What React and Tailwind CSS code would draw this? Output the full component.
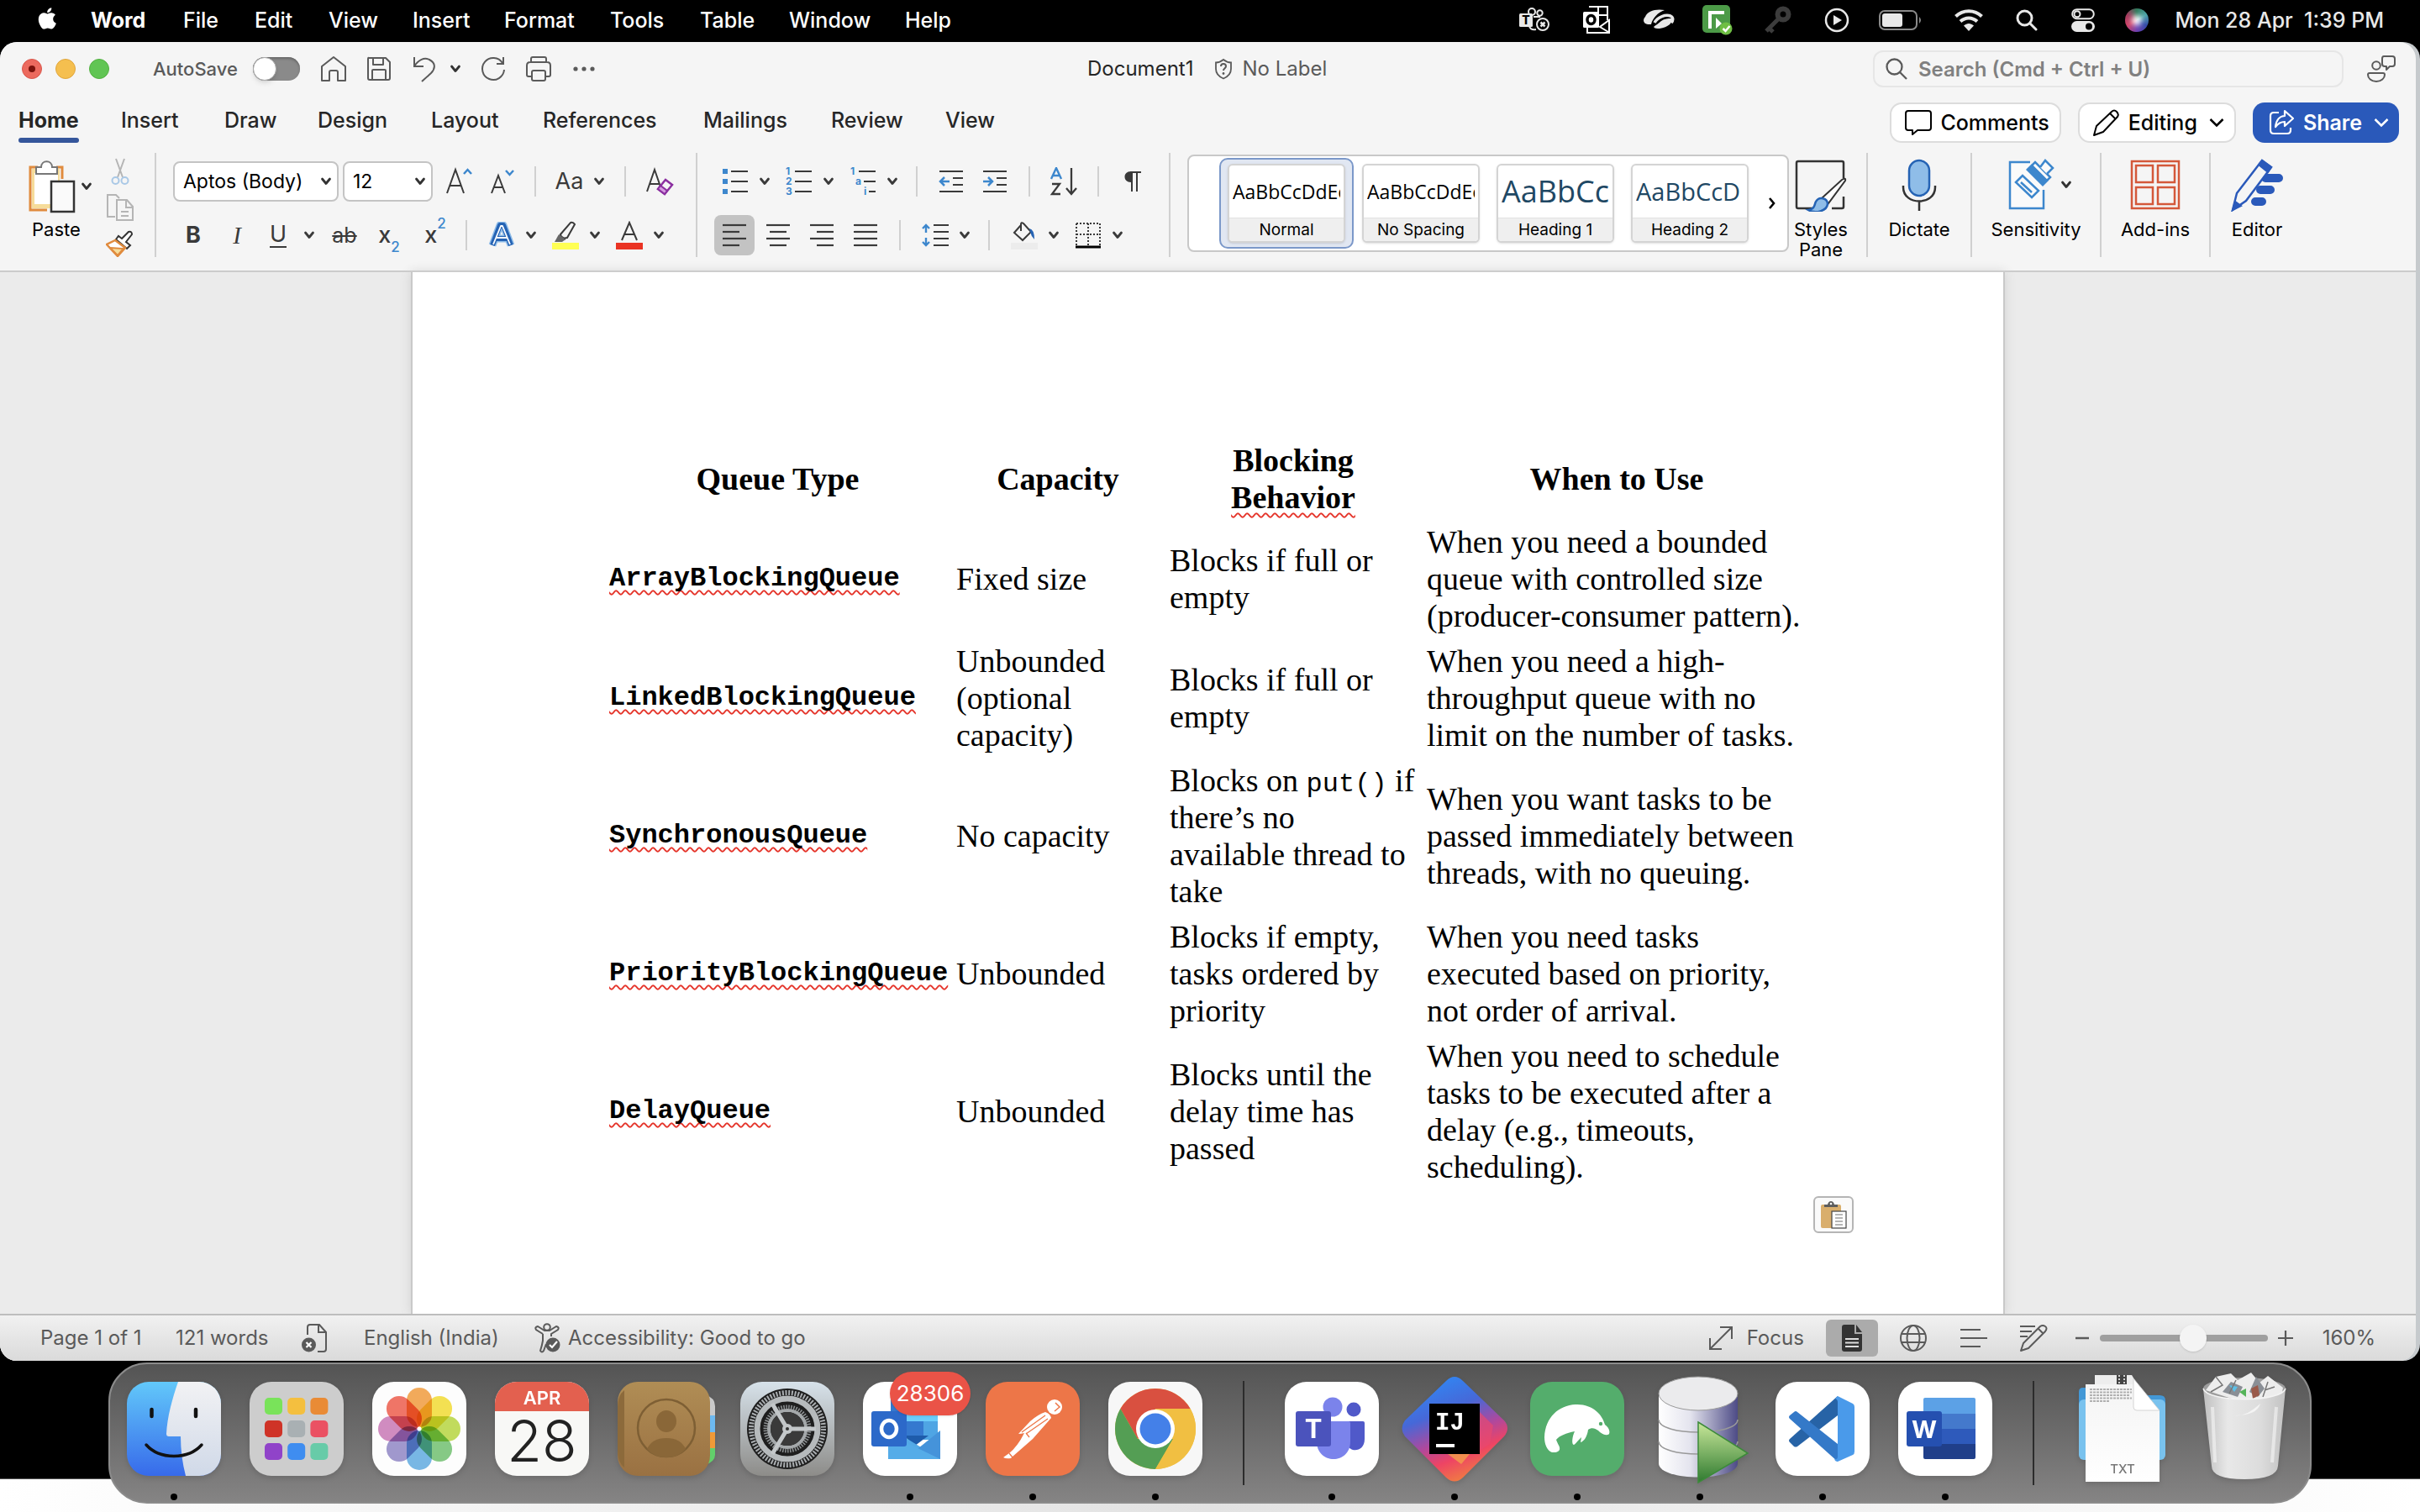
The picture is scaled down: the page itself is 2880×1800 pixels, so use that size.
import React from "react";

const Chev = ({ className = "" }) => (
  <svg className={"h-[10px] w-[14px] shrink-0 " + className} viewBox="0 0 14 10" fill="none" stroke="currentColor" strokeWidth="2.8" strokeLinecap="round" strokeLinejoin="round">
    <path d="M2.5 2 L7 7.5 L11.5 2" />
  </svg>
);

const Svg = ({ size = 32, w, h, vb, children, className = "", ...rest }) => (
  <svg width={w || size} height={h || size} viewBox={vb || `0 0 ${w || size} ${h || size}`} fill="none" stroke="currentColor" strokeWidth="2" className={"shrink-0 " + className} aria-hidden="true" {...rest}>
    {children}
  </svg>
);

const Sep = ({ className = "" }) => <div className={"h-9 w-0.5 shrink-0 bg-[#d0d0d0] " + className} />;
const TallSep = ({ className = "" }) => <div className={"w-0.5 shrink-0 self-stretch bg-[#d0d0d0] " + className} />;

const Tool = ({ label, children, className = "" }) => (
  <button type="button" aria-label={label} className={"flex h-12 shrink-0 items-center justify-center " + className}>{children}</button>
);
const Drop = ({ label, children, className = "" }) => (
  <Tool label={label} className={"w-[76px] gap-3 " + className}>{children}<Chev /></Tool>
);

/* ---------- menu bar ---------- */

function MenuBar() {
  const items = ["File", "Edit", "View", "Insert", "Format", "Tools", "Table", "Window", "Help"];
  return (
    <header className="flex h-[50px] shrink-0 items-center bg-black pr-[43px] pb-0.5 pl-10 text-[25px] leading-8 font-medium text-white">
      <Svg w={28} h={32} stroke="none" className="mb-1">
        <path fill="#fff" d="M23.2 16.8c0-3.3 2.7-4.9 2.8-5-1.5-2.2-3.9-2.5-4.7-2.6-2-.2-3.9 1.2-4.9 1.2s-2.6-1.2-4.2-1.1c-2.200 0-4.200 1.300-5.300 3.200-2.300 3.900-.6 9.700 1.600 12.900 1.100 1.600 2.400 3.300 4.100 3.200 1.600-.1 2.300-1.100 4.200-1.100 2 0 2.500 1.100 4.300 1 1.800 0 2.900-1.600 4-3.100 1.200-1.800 1.700-3.500 1.800-3.600-.1 0-3.700-1.400-3.700-5zM20 7.300c.9-1.100 1.500-2.600 1.300-4.100-1.300.1-2.900.9-3.800 2-.8.9-1.500 2.500-1.300 3.900 1.400.1 2.900-.7 3.800-1.800z" />
      </Svg>
      <nav className="ml-10 grid grid-cols-[110px_85px_88px_100px_109px_126px_107px_106px_138px_auto]">
        <button type="button" className="text-left font-bold">Word</button>
        {items.map((i) => <button key={i} type="button" className="text-left">{i}</button>)}
      </nav>
      <div className="ml-auto flex items-center text-[#e8e8e8]">
        <Svg w={38} h={32} className="mr-[38px]">
          <circle cx="16" cy="6" r="4" /><circle cx="25.500" cy="7.500" r="3.200" />
          <path d="M13 22c0 4 3 6 8 5M18 12h8" />
          <rect x="1" y="8" width="16" height="16" rx="1.500" fill="currentColor" stroke="none" />
          <text x="9" y="21" textAnchor="middle" fontFamily="Inter" fontWeight="800" fontSize="14" fill="#000" stroke="none">T</text>
          <circle cx="29" cy="21" r="7" fill="#000" /><path d="M26.500 18.500l5 5M31.500 18.500l-5 5" strokeWidth="2.500" />
        </Svg>
        <Svg w={34} h={34} className="mr-[38px]" stroke="#fff">
          <path d="M8 1h22v16M19 1v16M8 11h22M6 26v6h26V17l-11 8 10 6" />
          <rect x="1" y="7" width="19" height="19" rx="1.500" fill="#fff" stroke="none" />
          <ellipse cx="10.500" cy="16.500" rx="4.500" ry="5" stroke="#000" strokeWidth="3.500" />
        </Svg>
        <Svg w={38} h={28} stroke="none" className="mr-8">
          <path fill="currentColor" d="M3 10C5 3 16 0 26 2 18 5 12 11 10 19 1 20-1 14 3 10z" />
          <path fill="currentColor" d="M13 22c2-2 6-4 9-7 4-3 8-3 12-3 3 4-4 11-14 12-3 0-6 0-7-2z" />
          <path d="M14 17C18 10 27 7 33 9c4 2 3 6 1 8" stroke="currentColor" strokeWidth="3.500" />
        </Svg>
        <Svg w={38} h={38} stroke="none" className="mr-9">
          <rect x="1" y="1" width="33" height="33" rx="5" fill="#4c9a47" />
          <path d="M8 8h19v4H12v17H8z" fill="#fff" /><path d="M17 16l7 7-7 6z" fill="#fff" />
          <circle cx="29" cy="29" r="7.500" fill="#6fbe44" /><path d="M25.500 29l3 3 5-6" stroke="#fff" strokeWidth="2.500" fill="none" />
        </Svg>
        <Svg w={34} h={34} stroke="#3c3c3c" className="mr-[38px]">
          <circle cx="23" cy="10" r="6.500" strokeWidth="6" /><path d="M17 16L3 30M7 27l4 4" strokeWidth="5" />
        </Svg>
        <Svg size={30} className="mr-[34px]"><circle cx="15" cy="15" r="13" strokeWidth="2.500" /><path d="M11 9l10 6-10 6z" fill="currentColor" stroke="none" /></Svg>
        <Svg w={54} h={26} className="mr-9"><rect x="2" y="2" width="44" height="22" rx="6" stroke="#8a8a8a" /><rect x="5" y="5" width="24" height="16" rx="3" fill="currentColor" stroke="none" /><path d="M49 9q4 4 0 8z" fill="#8a8a8a" stroke="none" /></Svg>
        <Svg w={36} h={28} strokeWidth="4" className="mr-[38px]">
          <path d="M2.500 9.500C11 1 25 1 33.500 9.500M8 15.500c6-5.500 14-5.500 20 0" /><path d="M12 20.500c4-3.500 8-3.500 12 0L18 27z" fill="currentColor" stroke="none" />
        </Svg>
        <Svg size={26} strokeWidth="3" className="mr-10"><circle cx="10.500" cy="10.500" r="8.500" /><path d="M17 17l7 7" strokeLinecap="round" /></Svg>
        <Svg w={28} h={28} className="mr-9"><rect x="1.200" y="1.200" width="25.600" height="11" rx="5.500" /><circle cx="7" cy="6.700" r="3.500" /><rect x="0" y="15" width="28" height="13" rx="6.500" fill="currentColor" stroke="none" /><circle cx="21" cy="21.500" r="4" fill="#000" stroke="none" /></Svg>
        <span className="flex h-7 w-7 items-center justify-center rounded-full bg-[conic-gradient(#2f7a5b,#4ea4a9,#3349a8,#6d3fb0,#d0446a,#a03a5c,#2f7a5b)]"><span className="h-3 w-3 rounded-full bg-white blur-[3px]" /></span>
        <span className="ml-8 whitespace-pre">Mon 28 Apr  1:39 PM</span>
      </div>
    </header>
  );
}

/* ---------- title bar and tabs ---------- */

function TitleBar() {
  return (
    <div className="grid h-16 grid-cols-[1294px_1fr_auto] items-center text-[#5a5a5a]">
      <div className="flex items-center pl-[26px]">
        <div className="flex gap-4">
          <button type="button" aria-label="Close" className="flex h-6 w-6 items-center justify-center rounded-full border border-[#d9564b] bg-[#ec6a5e]"><span className="h-2 w-2 rounded-full bg-[#7a130c]" /></button>
          <button type="button" aria-label="Minimise" className="h-6 w-6 rounded-full border border-[#dfa53c] bg-[#f5bf4f]" />
          <button type="button" aria-label="Zoom" className="h-6 w-6 rounded-full border border-[#52b040] bg-[#61c554]" />
        </div>
        <label className="ml-[52px] flex items-center gap-[18px] text-[22px] leading-7 font-medium">
          AutoSave
          <input type="checkbox" className="h-7 w-14 shrink-0 appearance-none rounded-full bg-[#8a8a8a] shadow-[inset_0_2px_3px_#666] before:block before:h-7 before:w-7 before:rounded-full before:border before:border-[#aaa] before:bg-white before:shadow-md before:content-['']" />
        </label>
        <div className="ml-6 flex items-center gap-[22px]">
          <button type="button" aria-label="Home"><Svg strokeLinejoin="round"><path d="M2 30V13L16 2l14 11v17h-9V20q0-2-2-2h-6q-2 0-2 2v10z" /></Svg></button>
          <button type="button" aria-label="Save"><Svg strokeLinejoin="round"><path d="M4 3h20l5 5v19q0 2-2 2H5q-2 0-2-2V5q0-3 1-2zM9 3v8h12V3M8 29V18q0-1 1-1h14q1 0 1 1v11" /></Svg></button>
          <button type="button" aria-label="Undo" className="flex items-center gap-[14px]"><Svg><path d="M4 2v11h11M4 13C9 5 16 2 22 5c8 4 7 11 2 16L13 31" /></Svg><Chev className="text-[#333]" /></button>
          <button type="button" aria-label="Redo"><Svg><path d="M27 9A13 13 0 1 0 29 17M28 2v8h-8" /></Svg></button>
          <button type="button" aria-label="Print"><Svg strokeLinejoin="round"><path d="M7 8V4q0-2 2-2h14q2 0 2 2v4M8 25H4q-2 0-2-2V12q0-4 4-4h20q4 0 4 4v11q0 2-2 2h-4" /><rect x="8" y="18" width="16" height="12" rx="2" /></Svg></button>
          <button type="button" aria-label="More"><Svg stroke="none"><g fill="currentColor"><circle cx="6" cy="16" r="2.600" /><circle cx="16" cy="16" r="2.600" /><circle cx="26" cy="16" r="2.600" /></g></Svg></button>
        </div>
      </div>
      <div className="flex items-center text-[24px] leading-7">
        <span className="text-[#262626]">Document1</span>
        <Svg w={24} h={26} className="ml-6"><path d="M12 2c3 2.500 6 3.500 9 3.500V13c0 5-3 9-9 11.500C6 22 3 18 3 13V5.500C6 5.500 9 4.500 12 2z" strokeWidth="1.800" /><path d="M9 10c0-4 6-4 6 0 0 2-3 2.500-3 5" /><circle cx="12" cy="18.500" r="1.400" fill="currentColor" stroke="none" /></Svg>
        <span className="ml-[10px]">No Label</span>
      </div>
      <div className="flex items-center pr-6">
        <label className="flex h-11 w-[560px] items-center rounded-xl border-2 border-[#e6e6e6] pl-3">
          <Svg size={28} strokeWidth="2.300"><circle cx="11.500" cy="11.500" r="9" /><path d="M18 18l8 8" /></Svg>
          <input type="search" aria-label="Search" placeholder="Search (Cmd + Ctrl + U)" className="mt-0.5 ml-3 w-full bg-transparent text-[24px] leading-8 font-semibold outline-none placeholder:text-[#808080]" />
        </label>
        <button type="button" aria-label="Presence" className="ml-7"><Svg size={34}><circle cx="11" cy="13" r="4.800" /><path d="M3 22h16q2 0 2 2c0 4-4 8-10 8S1 28 1 24q0-2 2-2zM20 2h10q3 0 3 3v6q0 3-3 3h-3l-4 4v-4h-2q-3 0-3-3V5q0-3 2-3z" strokeLinejoin="round" /></Svg></button>
      </div>
    </div>
  );
}

function Tabs() {
  const tabs = ["Insert", "Draw", "Design", "Layout", "References", "Mailings", "Review", "View"];
  const pill = "flex h-12 items-center rounded-[14px] border-2 border-[#dcdcdc] bg-white text-black";
  return (
    <div className="mt-2 flex h-12 items-center text-[25px] leading-8 font-medium text-[#262626]">
      <nav className="ml-[22px] grid h-full grid-cols-[122px_123px_111px_135px_133px_191px_152px_136px_auto]">
        <button type="button" className="flex flex-col justify-between justify-self-start pt-[5px] font-bold">Home<span className="h-1.5 w-full rounded-full bg-[#35569b]" /></button>
        {tabs.map((t) => <button key={t} type="button" className="pb-1.5 text-left">{t}</button>)}
      </nav>
      <div className="mr-5 ml-auto flex gap-5">
        <button type="button" className={pill + " gap-2.5 pr-3 pl-4"}>
          <Svg size={32} strokeLinejoin="round"><path d="M4 2h24q3 0 3 3v17q0 3-3 3H15l-6 5v-5H4q-3 0-3-3V5q0-3 3-3z" /></Svg>Comments
        </button>
        <button type="button" className={pill + " gap-2.5 pr-3 pl-4"}>
          <Svg size={32} strokeLinejoin="round"><path d="M1 31l3-11L22 3q3-3 6 0t1 6L12 27zM20 5l7 7" /></Svg>Editing
          <svg className="ml-1 h-3 w-[18px]" viewBox="0 0 18 12" fill="none" stroke="currentColor" strokeWidth="2.500"><path d="M1.500 2L9 9.500 16.500 2" /></svg>
        </button>
        <button type="button" className="flex h-12 items-center gap-2.5 rounded-[14px] bg-[#2a59ba] pr-3 pl-[18px] font-semibold text-white">
          <Svg size={32} strokeLinejoin="round" strokeWidth="2.200"><path d="M13 4H7q-4 0-4 4v17q0 4 4 4h16q4 0 4-4v-3M20 2l10 9-10 9v-5c-5 0-8 2-11 6 1-8 5-13 11-13z" /></Svg>Share
          <svg className="ml-1 h-3 w-[18px]" viewBox="0 0 18 12" fill="none" stroke="currentColor" strokeWidth="2.500"><path d="M1.500 2L9 9.500 16.500 2" /></svg>
        </button>
      </div>
    </div>
  );
}

/* ---------- ribbon ---------- */

const Lines = ({ rows }) => (
  <Svg w={30} h={28} strokeWidth="2.200">{rows.map(([a, b], i) => <path key={i} d={`M${a} ${2 + i * 8}H${b}`} />)}</Svg>
);

function Combo({ label, value, className }) {
  return (
    <div className={"relative h-12 " + className}>
      <select aria-label={label} className="h-full w-full appearance-none rounded-lg border-2 border-[#c4c4c4] bg-white pl-2.5 text-[23px] leading-7 text-black"><option>{value}</option></select>
      <Chev className="pointer-events-none absolute top-[19px] right-2 text-[#333]" />
    </div>
  );
}

function Clipboard() {
  return (
    <div className="flex h-full w-[184px]">
      <button type="button" className="flex w-[120px] flex-col items-start pt-2 pl-8 text-[22px] leading-6 text-black">
        <span className="flex items-center gap-1">
          <Svg w={60} h={64}>
            <path d="M24 60H4V9h9M35 9h7v14" stroke="#e08b3e" strokeWidth="3" /><path d="M6 11h33v14H28v33H6z" fill="#f6dc9a" stroke="none" /><path d="M9 16h28v10H28v27H9z" fill="#fff" stroke="none" />
            <path d="M11 17V9h6c0-9 13-9 13 0h6v8z" fill="#fff" stroke="#777" />
            <rect x="29" y="26" width="27" height="36" fill="#fafafa" stroke="#333" strokeWidth="2.500" />
          </Svg>
          <Chev className="text-[#333]" />
        </span>
        <span className="mt-[7px] ml-1.5">Paste</span>
      </button>
      <div className="flex flex-col items-center gap-2.5 pt-1.5 pl-1.5">
        <button type="button" aria-label="Cut"><Svg w={32} h={32} stroke="#b5b5b5"><path d="M11 1l8 22M21 1l-8 22" /><circle cx="10.500" cy="27" r="4" stroke="#a9c8e6" /><circle cx="21.500" cy="27" r="4" stroke="#a9c8e6" /></Svg></button>
        <button type="button" aria-label="Copy"><Svg w={34} h={34} stroke="#b5b5b5"><path d="M11 28H2V2h10l4 4" /><path d="M13 8h12l7 8v16H13zM24 8v9h8M18 22h9M18 27h9" /></Svg></button>
        <button type="button" aria-label="Format Painter"><Svg w={34} h={32}><path d="M19 10l8-8q4-1 4 3l-7 9 5 4-4 4-13-11 3-4z" stroke="#333" fill="#fff" /><path d="M11 12L1 17l13 14 9-10z" stroke="#e08b3e" strokeWidth="2.500" fill="#fff" /><path d="M5 21l16 1-7 8z" fill="#f6dc9a" stroke="#e08b3e" /></Svg></button>
      </div>
    </div>
  );
}

function FontGroup() {
  return (
    <div className="ml-5 flex w-[622px] flex-col gap-4 pt-[10px] text-[#3a3a3a]">
      <div className="flex items-center">
        <Combo label="Font" value="Aptos (Body)" className="w-[197px]" />
        <Combo label="Font size" value="12" className="ml-[5px] w-[107px]" />
        <Tool label="Grow font" className="ml-1 w-[53px]"><Svg w={32} h={34}><path d="M2 31L12 3l10 28M6 22h12" /><path d="M22 8l4.500-5L31 8" stroke="#3d87cd" strokeWidth="2.500" /></Svg></Tool>
        <Tool label="Shrink font" className="w-[53px]"><Svg w={32} h={34}><path d="M2 31L10 10l8 21M5 24h10" /><path d="M19 4l4.500 5L28 4" stroke="#3d87cd" strokeWidth="2.500" /></Svg></Tool>
        <Sep className="ml-[11px]" />
        <Tool label="Change case" className="w-[105px] gap-3 text-[27px]">Aa<Chev /></Tool>
        <Sep />
        <Tool label="Clear formatting" className="w-20"><Svg w={34} h={34}><path d="M2 29L11 3l9 26M5 20h11" /><path d="M15 26l9-11 8 6-9 11z" fill="#f5f5f5" stroke="#8b2fa0" strokeWidth="2.500" /><path d="M15 26l3-4 8 6-3 4z" fill="#d59be0" stroke="#8b2fa0" /></Svg></Tool>
      </div>
      <div className="flex items-center text-[27px] leading-8">
        <Tool label="Bold" className="w-12 font-bold">B</Tool>
        <Tool label="Italic" className="w-14"><span className="font-['Liberation_Serif',serif] text-[29px] italic">I</span></Tool>
        <Tool label="Underline" className="w-[76px] gap-5"><span className="border-b-2 border-current leading-7">U</span><Chev /></Tool>
        <Tool label="Strikethrough" className="w-12"><span className="text-[25px] line-through">ab</span></Tool>
        <Tool label="Subscript" className="w-[58px] font-medium">x<span className="self-end text-[17px] leading-5 text-[#3d87cd]">2</span></Tool>
        <Tool label="Superscript" className="w-[52px] font-medium">x<span className="self-start text-[17px] leading-5 text-[#3d87cd]">2</span></Tool>
        <Sep className="ml-[10px]" />
        <Drop label="Text effects" className="ml-4"><Svg w={32} h={32} strokeLinejoin="round"><path d="M5 28L14 4h4l9 24M9 20h14" stroke="#8dbbe8" strokeWidth="9" /><path d="M5 28L14 4h4l9 24M9 20h14" stroke="#2563b4" strokeWidth="6" /><path d="M6 27L15 5h2l9 22M10 19h12" stroke="#fff" strokeWidth="1.800" /></Svg></Drop>
        <Drop label="Highlight"><Svg w={32} h={34}><path d="M10 16L22 2q3-1 5 2L18 20l-6 1zM9 17l7 5" stroke="#3a3a3a" /><path d="M8 16l8 6-4 3H3z" fill="#666" stroke="none" /><rect x="0" y="26" width="32" height="8" fill="#ffff54" stroke="none" /></Svg></Drop>
        <Drop label="Font colour"><Svg w={32} h={34}><path d="M7 23L16 2l9 21M10 16h12" /><rect x="0" y="26" width="32" height="8" fill="#ea3323" stroke="none" /></Svg></Drop>
      </div>
    </div>
  );
}

const Digit = ({ x, y, children }) => <text x={x} y={y} fontFamily="Inter" fontSize="12" fontWeight="700" fill="#3d87cd" stroke="none">{children}</text>;

function ParagraphGroup() {
  return (
    <div className="ml-5 flex w-[542px] flex-col gap-4 pt-[10px] text-[#3a3a3a]">
      <div className="flex items-center">
        <Drop label="Bullets"><Svg w={32} h={32}><path d="M11 4h20M11 16h20M11 28h20" strokeWidth="2.200" /><g fill="#3d87cd" stroke="none"><rect x="1" y="1" width="6" height="6" /><rect x="1" y="13" width="6" height="6" /><rect x="1" y="25" width="6" height="6" /></g></Svg></Drop>
        <Drop label="Numbering"><Svg w={32} h={34}><path d="M11 5h20M11 17h20M11 29h20" strokeWidth="2.200" /><Digit x="0" y="9">1</Digit><Digit x="0" y="21">2</Digit><Digit x="0" y="33">3</Digit></Svg></Drop>
        <Drop label="Multilevel list"><Svg w={32} h={34}><path d="M11 5h20M17 17h14M23 29h8" strokeWidth="2.200" /><Digit x="1" y="9">1</Digit><Digit x="7" y="21">a</Digit><Digit x="17" y="33">i</Digit></Svg></Drop>
        <Sep className="ml-3" />
        <Tool label="Decrease indent" className="ml-3.5 w-[52px]"><Svg w={30} h={28} strokeWidth="2.200"><path d="M1 2h28M17 10h12M17 18h12M1 26h28" /><path d="M13 14H2M7 9l-5 5 5 5" stroke="#3d87cd" strokeWidth="2.500" /></Svg></Tool>
        <Tool label="Increase indent" className="w-[52px]"><Svg w={30} h={28} strokeWidth="2.200"><path d="M1 2h28M17 10h12M17 18h12M1 26h28" /><path d="M1 14h11M7 9l5 5-5 5" stroke="#3d87cd" strokeWidth="2.500" /></Svg></Tool>
        <Sep className="ml-3.5" />
        <Tool label="Sort" className="w-20"><Svg w={34} h={34}><path d="M2 14L8 1l6 13M4 10h8" stroke="#3d87cd" strokeWidth="2.400" /><path d="M3 20h9L3 32h10M26 1v31M20 25l6 7 6-7" strokeWidth="2.300" /></Svg></Tool>
        <Sep />
        <Tool label="Show marks" className="w-20"><Svg w={22} h={26}><path d="M9 14C-1 14-1 1 9 1h11v2H9z" fill="currentColor" stroke="none" /><path d="M10 25V2M16 25V2M8 2h13" /></Svg></Tool>
      </div>
      <div className="flex items-center">
        <div className="flex gap-1">
          <Tool label="Align left" className="w-12 rounded-lg bg-[#c3c3c3]"><Lines rows={[[1, 29], [1, 21], [1, 29], [1, 21]]} /></Tool>
          <Tool label="Centre" className="w-12"><Lines rows={[[1, 29], [5, 25], [1, 29], [5, 25]]} /></Tool>
          <Tool label="Align right" className="w-12"><Lines rows={[[1, 29], [9, 29], [1, 29], [9, 29]]} /></Tool>
          <Tool label="Justify" className="w-12"><Lines rows={[[1, 29], [1, 29], [1, 29], [1, 29]]} /></Tool>
        </div>
        <Sep className="ml-4" />
        <Drop label="Line spacing" className="ml-4"><Svg w={32} h={28} strokeWidth="2.200"><path d="M14 2h18M14 10h18M14 18h18M14 26h18" /><path d="M5 11V2M1 6l4-4 4 4M5 17v9M1 22l4 4 4-4" stroke="#3d87cd" strokeWidth="2.400" /></Svg></Drop>
        <Sep className="ml-3" />
        <Drop label="Shading" className="ml-4"><Svg w={32} h={34}><path d="M12 5L4 14l10 9 10-10L15 3q-3-2-3 1v8" /><path d="M22 9q6 1 6 13-4-4-5-9z" fill="#2563b4" stroke="none" /><rect y="26" width="32" height="8" fill="#ececec" stroke="none" /></Svg></Drop>
        <Drop label="Borders"><Svg w={32} h={32}><path d="M2 2h28M2 2v26M30 2v26M16 2v26M2 15h28" strokeDasharray="2 2" /><path d="M1 30h30" stroke="#000" strokeWidth="3" /></Svg></Drop>
      </div>
    </div>
  );
}

function StyleCard({ name, children, selected }) {
  return (
    <button type="button" className={"flex h-[108px] w-40 items-center justify-center rounded-[10px] border-2 " + (selected ? "border-[#7b98c9] bg-[#e1e7f2]" : "border-transparent")}>
      <span className="flex h-[94px] w-[140px] flex-col overflow-hidden rounded-md border-2 border-[#d4d4d4] bg-white shadow-sm">
        <span className="flex h-[62px] items-center overflow-hidden px-1"><span className="w-full overflow-hidden text-left whitespace-nowrap">{children}</span></span>
        <span className="flex flex-1 items-center justify-center border-t border-[#e2e2e2] bg-[#efefef] text-[19px] leading-6 text-black">{name}</span>
      </span>
    </button>
  );
}

const Big = ({ icon, label, className = "" }) => (
  <button type="button" className={"flex h-full flex-col items-center pt-1.5 text-[22px] leading-6 text-black " + className}>
    <span className="flex h-16 items-center gap-1.5">{icon}</span>
    <span className="mt-[9px] text-center">{label}</span>
  </button>
);

function Ribbon() {
  return (
    <div className="mt-3 border-b-2 border-[#cbcbcb] pb-4">
      <div className="flex h-[124px]">
        <Clipboard />
        <TallSep />
        <FontGroup />
        <TallSep />
        <ParagraphGroup />
        <TallSep className="-ml-px" />
        <div className="mt-0.5 ml-5 flex h-[116px] items-center rounded-lg border-2 border-[#c8c8c8] bg-white pl-9">
          <StyleCard name="Normal" selected><span className="font-['Open_Sans',sans-serif] text-[23px] leading-9 text-black">AaBbCcDdEe</span></StyleCard>
          <StyleCard name="No Spacing"><span className="font-['Open_Sans',sans-serif] text-[23px] leading-9 text-black">AaBbCcDdEe</span></StyleCard>
          <StyleCard name="Heading 1"><span className="font-['Open_Sans',sans-serif] text-[36px] leading-[48px] text-[#1f4864]">AaBbCc</span></StyleCard>
          <StyleCard name="Heading 2"><span className="font-['Open_Sans',sans-serif] text-[29px] leading-10 text-[#1f4864]">AaBbCcD</span></StyleCard>
          <button type="button" aria-label="More styles" className="flex w-9 justify-center"><Svg w={12} h={16} strokeWidth="2.600"><path d="M3 2l5 6-5 6" /></Svg></button>
        </div>
        <Big className="mr-4 w-[76px]" label={<>Styles<br />Pane</>} icon={<Svg w={66} h={64}>
          <path d="M24 60H6q-2 0-2-2V6q0-2 2-2h52q2 0 2 2v18M60 46v12q0 2-2 2H46" stroke="#333" strokeWidth="2.500" />
          <path d="M34 48L58 26q5-3 4 1L42 54z" fill="#fff" stroke="#333" /><path d="M18 62c8-1 7-6 9-10 4-7 14-4 14 3-1 8-14 12-23 7z" fill="#8fbde8" stroke="#2563b4" strokeWidth="2.500" />
        </Svg>} />
        <TallSep />
        <Big className="w-[122px]" label="Dictate" icon={<Svg w={42} h={62}><rect x="9" y="2" width="24" height="42" rx="12" fill="#8fbde8" stroke="#2563b4" strokeWidth="2.500" /><path d="M2 32v2c0 22 38 22 38 0v-2M21 50v12" stroke="#333" strokeWidth="2.500" /></Svg>} />
        <TallSep />
        <Big className="w-[152px]" label="Sensitivity" icon={<><span className="w-0.5" /><Svg w={58} h={64} stroke="#3d87cd" strokeWidth="2.500"><path d="M28 5H4v55h40V38" fill="#fafafa" /><path d="M11 29l8-8 19 18-8 8zM17 29l13 12" fill="#fafafa" /><path d="M25 14l9-9 18 18-9 9z" fill="#fafafa" /><path d="M25 14l5-5 18 18-5 5z" fill="#3d87cd" /><path d="M40 11l6-8 9 9-7 7" fill="#fafafa" /></Svg><Chev className="text-[#333]" /></>} />
        <TallSep />
        <Big className="w-32" label="Add-ins" icon={<Svg w={60} h={62} stroke="#d4583a" strokeWidth="2.500"><rect x="2" y="3" width="56" height="56" /><rect x="7" y="8" width="20" height="20" /><rect x="33" y="8" width="20" height="20" /><rect x="7" y="34" width="20" height="20" /><rect x="33" y="34" width="20" height="20" /></Svg>} />
        <TallSep />
        <Big className="w-[110px]" label="Editor" icon={<Svg w={64} h={64} stroke="#2a59ba"><path d="M42 24h16M36 38h12M30 52h8" strokeWidth="10" strokeLinecap="round" /><path d="M3 62L8 42 38 3l11 8-30 40z" fill="#f5f5f5" strokeWidth="2.500" /><path d="M3 62l3-10 7 5zM34 8l4-5 11 8-4 6z" fill="#2a59ba" /></Svg>} />
      </div>
    </div>
  );
}

/* ---------- document ---------- */

const Wavy = ({ children, className = "" }) => (
  <span className={"underline decoration-[#e5352b] decoration-wavy decoration-2 underline-offset-[5px] [text-decoration-skip-ink:none] " + className}>{children}</span>
);

const rows = [
  ["ArrayBlockingQueue", ["Fixed size"], ["Blocks if full or", "empty"], ["When you need a bounded", "queue with controlled size", "(producer-consumer pattern)."]],
  ["LinkedBlockingQueue", ["Unbounded", "(optional", "capacity)"], ["Blocks if full or", "empty"], ["When you need a high-", "throughput queue with no", "limit on the number of tasks."]],
  ["SynchronousQueue", ["No capacity"], [<>Blocks on <code className="font-['Liberation_Mono',monospace] text-[32px]">put()</code> if</>, "there’s no", "available thread to", "take"], ["When you want tasks to be", "passed immediately between", "threads, with no queuing."]],
  ["PriorityBlockingQueue", ["Unbounded"], ["Blocks if empty,", "tasks ordered by", "priority"], ["When you need tasks", "executed based on priority,", "not order of arrival."]],
  ["DelayQueue", ["Unbounded"], ["Blocks until the", "delay time has", "passed"], ["When you need to schedule", "tasks to be executed after a", "delay (e.g., timeouts,", "scheduling)."]],
];

function Document() {
  return (
    <main className="flex flex-1 justify-center bg-[#ebebeb]">
      <article className="flex w-[66%] flex-col items-center border-x-2 border-[#c9c9c9] bg-white pt-[198px] shadow-[0_0_12px_#d0d0d0]">
        <div className="ml-2 flex flex-col">
          <table className="table-fixed text-left font-['Liberation_Serif','Times_New_Roman',serif] text-[38px] leading-[44px] text-black">
            <colgroup><col className="w-[413px]" /><col className="w-[254px]" /><col className="w-[306px]" /><col className="w-[460px]" /></colgroup>
            <thead>
              <tr className="text-center">
                <th className="py-1 pr-3">Queue Type</th>
                <th className="py-1 pr-3">Capacity</th>
                <th className="py-1 pr-3">Blocking<br /><Wavy>Behavior</Wavy></th>
                <th className="py-1 pr-2">When to Use</th>
              </tr>
            </thead>
            <tbody>
              {rows.map(([name, ...cells]) => (
                <tr key={name}>
                  <th scope="row" className="py-[5px] font-['Liberation_Mono',monospace] text-[32px]"><Wavy>{name}</Wavy></th>
                  {cells.map((lines, i) => (
                    <td key={i} className="py-[5px] whitespace-nowrap">{lines.map((l, j) => <div key={j} className="h-11">{l}</div>)}</td>
                  ))}
                </tr>
              ))}
            </tbody>
          </table>
          <button type="button" aria-label="Paste options" className="mt-2 -mr-12 flex h-11 w-12 items-center justify-center self-end rounded-md border-2 border-[#b5b5b5] bg-[#fafafa]">
            <Svg w={32} h={34} stroke="none"><rect x="1" y="5" width="24" height="28" rx="2" fill="#d9ae6c" /><path d="M5 8V5h4q1-4 4-4t4 4h4v3z" fill="#5d5d5d" /><circle cx="13" cy="4" r="1.300" fill="#fff" /><rect x="14" y="13" width="17" height="20" fill="#fff" stroke="#444" strokeWidth="1.200" /><path d="M18 17h9M18 21h9M18 25h9M18 29h9" stroke="#b5b5b5" strokeWidth="2" /></Svg>
          </button>
        </div>
      </article>
    </main>
  );
}

/* ---------- status bar ---------- */

function StatusBar() {
  return (
    <footer className="flex h-14 items-center border-t-2 border-[#bdbdbd] bg-linear-to-b from-[#f1f1f1] to-[#dadada] pr-[48px] pl-12 text-[24px] leading-7 text-[#5a5a5a]">
      <button type="button" className="w-[161px] text-left">Page 1 of 1</button>
      <button type="button" className="w-[149px] text-left">121 words</button>
      <button type="button" aria-label="Proofing" className="w-[75px]"><Svg w={34} h={36}><path d="M8 14V5q0-3 3-3h11l8 9v20q0 3-3 3h-7M21 2v9h9" /><circle cx="9.500" cy="26" r="8.500" fill="currentColor" stroke="none" /><path d="M6.500 23l6 6M12.500 23l-6 6" stroke="#fff" strokeWidth="2.200" /></Svg></button>
      <button type="button" className="w-[203px] text-left">English (India)</button>
      <button type="button" className="flex items-center gap-2">
        <Svg w={32} h={36}><circle cx="15" cy="5" r="3.800" /><path d="M10 13v8q-1 6-3 12 2 3 4 0l3-8M10 13L2 8q-2-3 2-4l8 5h6l8-5q4 1 2 4l-8 5v3" /><circle cx="22" cy="26" r="8.500" fill="currentColor" stroke="none" /><path d="M18 26l3 3 6-7" stroke="#fff" strokeWidth="2.200" /></Svg>
        Accessibility: Good to go
      </button>
      <div className="ml-auto flex items-center">
        <button type="button" className="flex w-[140px] items-center gap-4"><Svg w={30} h={30}><path d="M2 28L28 2M14 2h14v14M2 15v13h14" /></Svg>Focus</button>
        <button type="button" aria-label="Print layout" className="flex h-11 w-[62px] items-center justify-center rounded-md bg-[#ababab] text-[#333]"><Svg w={26} h={34} stroke="none"><path d="M4 1h12v11h9v18q0 3-3 3H4q-3 0-3-3V4q0-3 3-3zM18 1l7 9h-7z" fill="currentColor" /><path d="M5 18h16M5 22.500h16M5 27h16" stroke="#ddd" strokeWidth="2" /></Svg></button>
        <button type="button" aria-label="Web layout" className="ml-[26px]"><Svg w={32} h={34}><circle cx="16" cy="17" r="15" /><ellipse cx="16" cy="17" rx="7.500" ry="15" /><path d="M2 12h28M2 22h28" /></Svg></button>
        <button type="button" aria-label="Outline" className="ml-10"><Svg w={32} h={26} strokeWidth="2.200"><path d="M0 3h24M0 13h32M0 23h24" /></Svg></button>
        <button type="button" aria-label="Draft" className="ml-[38px]"><Svg w={34} h={34}><path d="M1 3h18M1 9h14M1 15h9" /><path d="M2 32l3-9L25 3q3-2 6 0t0 6L11 29zM23 6l6 6" strokeLinejoin="round" /></Svg></button>
        <button type="button" aria-label="Zoom out" className="ml-8"><Svg w={18} h={18} strokeWidth="2.500"><path d="M1 9h16" /></Svg></button>
        <input type="range" aria-label="Zoom" min="0" max="100" defaultValue="57" className="mx-3 h-2 w-[200px] appearance-none rounded-full bg-[#9f9f9f] [&::-webkit-slider-thumb]:h-8 [&::-webkit-slider-thumb]:w-8 [&::-webkit-slider-thumb]:appearance-none [&::-webkit-slider-thumb]:rounded-full [&::-webkit-slider-thumb]:bg-[#f4f4f4] [&::-webkit-slider-thumb]:shadow" />
        <button type="button" aria-label="Zoom in"><Svg w={18} h={18} strokeWidth="2.200"><path d="M0 9h18M9 0v18" /></Svg></button>
        <button type="button" className="ml-[35px]">160%</button>
      </div>
    </footer>
  );
}

/* ---------- dock ---------- */

const Tile = ({ fill = "#fff", children }) => (
  <svg className="block h-28 w-28 overflow-visible drop-shadow-md" viewBox="0 0 112 112" aria-hidden="true">
    <defs><clipPath id="tile"><rect width="112" height="112" rx="26" /></clipPath></defs>
    {fill !== "none" && <rect width="112" height="112" rx="26" fill={fill} />}
    {children}
  </svg>
);

const Grad = ({ id, from, to, x2 = 0, y2 = 1 }) => (
  <linearGradient id={id} x1="0" y1="0" x2={x2} y2={y2}><stop stopColor={from} /><stop offset="1" stopColor={to} /></linearGradient>
);

const Finder = () => (
  <Tile fill="url(#fg)">
    <defs><Grad id="fg" from="#62c8fa" to="#376aea" /><Grad id="fw" from="#f2f2f4" to="#d0d9e8" /></defs>
    <path clipPath="url(#tile)" d="M61 0C54 20 48 42 47 62q0 3 3 3h14c0 16 2 32 6 47h42V0z" fill="url(#fw)" />
    <path d="M29.500 33v8M82 33v8" stroke="#111" strokeWidth="4.500" strokeLinecap="round" />
    <path d="M23 75c16 18 50 18 66 0" fill="none" stroke="#111" strokeWidth="3.500" strokeLinecap="round" />
  </Tile>
);

const Launchpad = () => {
  const c = ["#79e35a", "#f4bf3f", "#e98b35", "#cf3327", "#a9b0b3", "#ea5163", "#9043c9", "#3f8df0", "#67cba8"];
  return <Tile fill="#cdcdcd">{c.map((f, i) => <rect key={i} x={18 + (i % 3) * 27.200} y={19 + Math.floor(i / 3) * 27} width="21" height="20" rx="5" fill={f} />)}</Tile>;
};

const Photos = () => {
  const c = ["#f29a38", "#f3dc2c", "#b6d63b", "#6cbf6b", "#5ba9e0", "#8c82c4", "#c874b4", "#ee5847"];
  return <Tile fill="#fdfdfd">{c.map((f, i) => <rect key={i} x="41" y="7" width="30" height="47" rx="15" fill={f} fillOpacity=".82" transform={`rotate(${i * 45} 56 56)`} style={{ mixBlendMode: "multiply" }} />)}<circle cx="56" cy="56" r="2.500" fill="#fff" /></Tile>;
};

const Calendar = () => (
  <Tile fill="#f8f8f6">
    <path clipPath="url(#tile)" d="M0 0h112v35H0z" fill="#e3604f" />
    <text x="56" y="27" textAnchor="middle" fontFamily="Inter" fontWeight="600" fontSize="22" fill="#fff">APR</text>
    <text x="56" y="95" textAnchor="middle" fontFamily="Inter" fontWeight="300" fontSize="68" fill="#222">28</text>
  </Tile>
);

const Contacts = () => (
  <Tile fill="none">
    <path d="M104 15q12 4 12 14v11h-12z" fill="#c9c9c9" /><path d="M104 40h12v20h-12z" fill="#6db9f0" /><path d="M104 60h12v19h-12z" fill="#f09a38" /><path d="M104 79h12v8q0 8-12 12z" fill="#62cf6b" />
    <defs><Grad id="cg" from="#b08d55" to="#9a7142" /></defs>
    <rect width="110" height="112" rx="24" fill="url(#cg)" /><path d="M8 10q-8 6-8 20v52q0 14 8 20z" fill="#8c6a3b" />
    <circle cx="58" cy="55" r="34" fill="none" stroke="#7e5f34" strokeWidth="2.500" /><ellipse cx="58" cy="47" rx="12" ry="13" fill="#8a6738" /><path d="M35 80q6-13 23-13t23 13q-8 10-23 10t-23-10z" fill="#8a6738" />
  </Tile>
);

const Settings = () => (
  <Tile fill="url(#sg)">
    <defs><Grad id="sg" from="#d7e2ea" to="#8d8c89" /></defs>
    <circle cx="56" cy="56" r="48" fill="#1e1e1e" /><circle cx="56" cy="56" r="43" fill="none" stroke="#a9adb0" strokeWidth="6" strokeDasharray="2 1.700" />
    <circle cx="56" cy="56" r="36" fill="none" stroke="#b6babc" strokeWidth="7" /><circle cx="56" cy="56" r="26" fill="none" stroke="#8d9193" strokeWidth="5" strokeDasharray="1.500 1.500" /><circle cx="56" cy="56" r="22" fill="none" stroke="#a4a8aa" strokeWidth="4" /><circle cx="56" cy="56" r="20" fill="#3a3a3a" />
    <path d="M56 56h34M56 56L38 26M56 56L38 86" stroke="#c3c7c9" strokeWidth="5" /><circle cx="56" cy="56" r="6" fill="#c3c7c9" /><circle cx="56" cy="56" r="2" fill="#333" />
  </Tile>
);

const Outlook = () => (
  <Tile>
    <path d="M33 20h56v40H33z" fill="#3579cf" /><path d="M62 20h27v26H62z" fill="#54b5f3" /><path d="M52 38h37v9H52z" fill="#6ccdfb" /><path d="M52 47h20v17H52z" fill="#3579cf" /><path d="M72 47h17v22H72z" fill="#4fa5e4" />
    <path d="M48 64h30L62 76z" fill="#1e5cab" /><path d="M30 92V54l62 38z" fill="#53a9e6" /><path d="M92 58v34H50z" fill="#4593da" /><path d="M30 62l62 30H30z" fill="#55ace8" />
    <rect x="10" y="35" width="42" height="42" rx="3" fill="#2c69c9" /><ellipse cx="31" cy="56" rx="9" ry="10" fill="none" stroke="#fff" strokeWidth="4.500" />
  </Tile>
);

const Postman = () => (
  <Tile fill="#ed7648">
    <circle cx="82" cy="30" r="9" fill="#fff" /><path d="M83 25l5 5-6 5" fill="none" stroke="#ed7648" strokeWidth="1.500" />
    <path d="M71 36q6 2 7 7L56 68 32 89l-2 2q-6 1-9-1l7-5q10-8 18-24-4 1-7 1l14-15q9-8 18-11z" fill="#fff" /><path d="M43 60L71 40M48 62L74 44M52 66l-4-5M28 85l4 5" stroke="#ed7648" strokeWidth="1.300" />
  </Tile>
);

const Chrome = () => (
  <Tile fill="#f7f7f7">
    <circle cx="56" cy="56" r="48" fill="#f1bf42" />
    <path d="M14.400 32A48 48 0 0 1 97.600 32H56L35 68z" fill="#d95040" />
    <path d="M14.400 32A48 48 0 0 0 56 104L77 68H35z" fill="#549e54" />
    <path d="M56 32h41.600A48 48 0 0 1 56 104L77 68z" fill="#f1bf42" />
    <circle cx="56" cy="56" r="23" fill="#fff" /><circle cx="56" cy="56" r="18.500" fill="#4480e8" />
  </Tile>
);

const Teams = () => (
  <Tile>
    <circle cx="82" cy="33" r="8.500" fill="#5059c9" /><path d="M72 47h21q2 0 2 2v19c0 16-17 16-20 8z" fill="#5059c9" />
    <circle cx="57" cy="30" r="11.500" fill="#7b83eb" /><path d="M38 47h38q2 0 2 2v22c0 28-40 28-40 0z" fill="#7b83eb" />
    <rect x="13" y="35" width="42" height="42" rx="3" fill="#4b53bc" /><text x="34" y="67" textAnchor="middle" fontFamily="Inter" fontWeight="700" fontSize="31" fill="#fff">T</text>
  </Tile>
);

const IntelliJ = () => (
  <Tile fill="none">
    <defs>
      <linearGradient id="ij" x1=".2" y1="0" x2=".6" y2="1"><stop stopColor="#2d8cf8" /><stop offset=".35" stopColor="#4668d8" /><stop offset=".6" stopColor="#b0489c" /><stop offset=".78" stopColor="#ee4464" /><stop offset="1" stopColor="#f08040" /></linearGradient>
    </defs>
    <path d="M46-1q10-10 20 0l49 47q8 9 0 19l-49 49q-10 9-20 0L-3 65q-7-9 0-19z" fill="url(#ij)" />
    <path d="M86 36l16 16-4 22-12 8z" fill="#e8496f" opacity=".7" /><path d="M48 86h26l-10 12z" fill="#f3a04a" opacity=".8" />
    <rect x="26" y="26" width="60" height="60" fill="#000" /><path d="M34 76h22" stroke="#fff" strokeWidth="4" />
    <text x="33" y="57" fontFamily="Liberation Mono" fontWeight="700" fontSize="29" fill="#fff">IJ</text>
  </Tile>
);

const Manatee = () => (
  <Tile fill="#54ad6c">
    <path d="M17 66C18 42 34 28 54 27c20-1 32 12 35 24 6 4 7 12 3 12-4 1-8-2-11-5-4-3-8-4-12-1-1 8-5 14-9 15l1-6c-4 4-8 9-9 9-3 0-2-10 1-16-10 2-18 5-22 10 2 6 5 8 4 12-2 4-8 3-9 3-6-2-9-10-9-18z" fill="#fff" />
    <circle cx="84" cy="50" r="2.200" fill="#54ad6c" />
  </Tile>
);

const Database = () => (
  <Tile fill="none">
    <defs><linearGradient id="db"><stop stopColor="#fff" /><stop offset=".4" stopColor="#e4e4ee" /><stop offset="1" stopColor="#4d4b86" /></linearGradient><Grad id="pl" from="#c9e89a" to="#2f7a30" /></defs>
    <path d="M7 14v83c0 22 94 22 94 0V14z" fill="url(#db)" /><path d="M7 45c0 20 94 20 94 0M7 71c0 20 94 20 94 0" fill="none" stroke="#999" strokeWidth="1.500" />
    <ellipse cx="54" cy="14" rx="47" ry="20" fill="#ebebed" stroke="#999" strokeWidth="1" />
    <path d="M54 48l59 37-59 35z" fill="url(#pl)" stroke="#3c8a3a" strokeWidth="1.500" />
  </Tile>
);

const VSCode = () => (
  <Tile>
    <path d="M74 17L17 68q-2 2 0 4l5 5q2 1 4 0l48-37z" fill="#2763a6" />
    <path d="M74 95L17 44q-2-2 0-4l5-4q2-2 4 0l48 38z" fill="#3479c8" />
    <path d="M74 17l18 9q2 1 2 4v53q0 3-2 4l-18 8q-3 0-4-3 4 1 4-3V24q0-3-3-4z" fill="#4a9aea" />
  </Tile>
);

const WordIcon = () => (
  <Tile>
    <path d="M30 21q0-2 2-2h58q2 0 2 2v17H30z" fill="#5ca1e6" /><path d="M30 38h62v18H30z" fill="#4479cc" /><path d="M30 56h62v18H30z" fill="#2e5abb" /><path d="M30 74h62v16q0 2-2 2H32q-2 0-2-2z" fill="#203f8a" />
    <rect x="10" y="35" width="42" height="42" rx="3" fill="#2550b0" /><text x="31" y="67" textAnchor="middle" fontFamily="Inter" fontWeight="700" fontSize="29" fill="#fff">W</text>
  </Tile>
);

const Files = () => (
  <Tile fill="none">
    <defs><Grad id="pg" from="#f4f4f4" to="#fff" /></defs>
    <path d="M5 12q0-5 5-5h30l8 9h53q7 0 7 6v60H5z" fill="#4398d6" /><rect x="5" y="21" width="103" height="72" rx="6" fill="#79c2ee" />
    <path d="M24-8h44l24 40v60H24z" fill="#ededed" /><path d="M50-8h12V4H50z" fill="#444" /><path d="M53-8v12M59-8v12" stroke="#fff" strokeWidth="1.500" strokeDasharray="2 2" />
    <path d="M13 3h57l31 31v85H13z" fill="url(#pg)" /><path d="M70-4l31 38H74q-4 0-4-4z" fill="#fff" stroke="#ccc" strokeWidth=".8" />
    <path d="M18 9h50M18 12.500h50M18 16h48M18 19.500h50M18 23h24" stroke="#b0b0b0" strokeWidth="2" strokeDasharray="3 1" />
    <text x="57" y="109" textAnchor="middle" fontFamily="Inter" fontSize="15" fontWeight="500" fill="#777">TXT</text>
  </Tile>
);

const Trash = () => (
  <Tile fill="none">
    <defs><linearGradient id="tr"><stop stopColor="#bfbfbf" /><stop offset=".3" stopColor="#e8e8e8" /><stop offset=".7" stopColor="#dcdcdc" /><stop offset="1" stopColor="#c2c2c2" /></linearGradient></defs>
    <ellipse cx="56" cy="8" rx="49" ry="13" fill="#9d9d9d" />
    <path d="M10 10L22-6l18-4 8 8 16-9 10 12 10-8 18 14-2 10-44 8z" fill="#ededed" /><path d="M30 12l10-12 14 6-6 12zM62 12L70-6l10 14-8 10z" fill="#8a8f96" /><path d="M38 4l10 2-4 6z" fill="#5bc0e8" /><path d="M50 12l8-4v10z" fill="#56b45a" /><path d="M64 8l8-4 2 12-8 4z" fill="#9a5a4a" /><path d="M22-6l8 10-14 8M46-2l-8 16M84 0l-6 18M92 6l-12 4" stroke="#777" strokeWidth="1.500" fill="none" />
    <path d="M7 8c4 17 94 17 98 0L96 100q-1 16-40 16T17 100z" fill="url(#tr)" />
    <path d="M18 30l3 66M94 30l-5 66" stroke="#fff" strokeWidth="4" opacity=".5" /><path d="M45 40q12 2 30-14-4 14-30 14z" fill="#f4f4f4" />
    <path d="M7 8c4 17 94 17 98 0" fill="none" stroke="#f4f4f4" strokeWidth="1.500" />
  </Tile>
);

function DockItem({ label, icon, running, badge }) {
  return (
    <button type="button" aria-label={label} className="relative flex w-28 flex-col items-center">
      {icon}
      {running && <span className="mt-[21px] h-2 w-2 rounded-full bg-black" />}
      {badge && <span className="absolute -top-3 -right-4 flex h-[52px] w-24 items-center justify-center rounded-full bg-[#ea5347] text-[26px] leading-8 text-white shadow">{badge}</span>}
    </button>
  );
}

function Dock() {
  const bar = <div className="mx-[14px] mt-[-1px] h-[124px] w-0.5 bg-[#2c2c2c]" />;
  return (
    <div className="relative flex h-[180px] shrink-0 items-start justify-center bg-black pt-0.5">
      <div className="absolute inset-x-0 bottom-0 h-10 border-t border-[#555] bg-linear-to-r from-white via-[#e2e2e2] to-white" />
      <div className="relative flex h-[168px] gap-[34px] rounded-[46px] border-2 border-[#8b8b8b] bg-linear-to-b from-[#545454] to-[#858484] pt-[21px] pr-[22px] pl-5">
        <DockItem label="Finder" icon={<Finder />} running />
        <DockItem label="Launchpad" icon={<Launchpad />} />
        <DockItem label="Photos" icon={<Photos />} />
        <DockItem label="Calendar" icon={<Calendar />} />
        <DockItem label="Contacts" icon={<Contacts />} />
        <DockItem label="System Settings" icon={<Settings />} />
        <DockItem label="Outlook" icon={<Outlook />} running badge="28306" />
        <DockItem label="Postman" icon={<Postman />} running />
        <DockItem label="Chrome" icon={<Chrome />} running />
        {bar}
        <DockItem label="Teams" icon={<Teams />} running />
        <DockItem label="IntelliJ IDEA" icon={<IntelliJ />} running />
        <DockItem label="Manatee" icon={<Manatee />} running />
        <DockItem label="SQL Developer" icon={<Database />} running />
        <DockItem label="Visual Studio Code" icon={<VSCode />} running />
        <DockItem label="Word" icon={<WordIcon />} running />
        {bar}
        <DockItem label="Downloads" icon={<Files />} />
        <DockItem label="Bin" icon={<Trash />} />
      </div>
    </div>
  );
}

export default function App() {
  return (
    <div className="flex min-h-screen flex-col bg-black font-['Inter',sans-serif]">
      <MenuBar />
      <div className="flex flex-1 rounded-[20px] bg-[#c6cacd] pr-[5px]">
        <div className="flex flex-1 flex-col overflow-hidden rounded-[20px] bg-[#f5f5f5]">
          <TitleBar />
          <Tabs />
          <Ribbon />
          <Document />
          <StatusBar />
        </div>
      </div>
      <Dock />
    </div>
  );
}
